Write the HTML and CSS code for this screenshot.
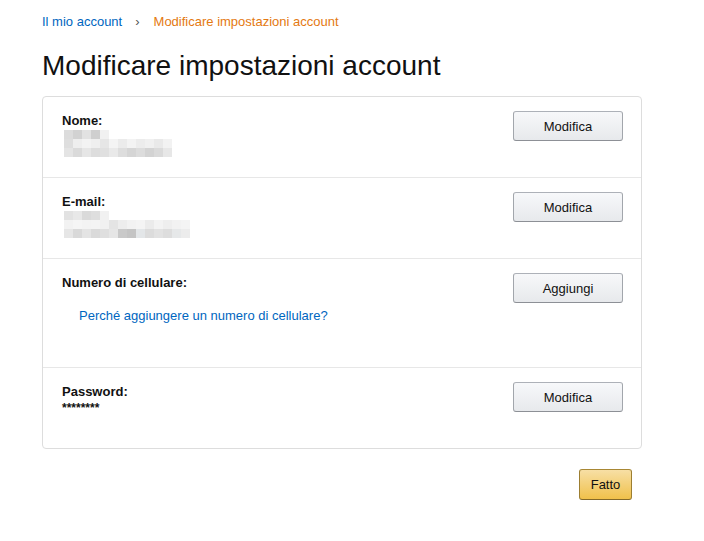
FILE: index.html
```html
<!DOCTYPE html>
<html lang="it">
<head>
<meta charset="utf-8">
<title>Modificare impostazioni account</title>
<link rel="stylesheet" href="styles.css">
</head>
<body>
<div class="page">
  <nav class="breadcrumb">
    <a class="crumb-link" href="#">Il mio account</a>
    <span class="crumb-sep">›</span>
    <span class="crumb-current">Modificare impostazioni account</span>
  </nav>
  <h1 class="title">Modificare impostazioni account</h1>
  <div class="card">
    <div class="row">
      <div class="info">
        <div class="label">Nome:</div>
        <svg class="blur" width="108" height="27" viewBox="0 0 108 27">
          <rect x="0" y="0" width="9" height="9" fill="#dcdcdc"/>
          <rect x="9" y="0" width="9" height="9" fill="#d2d2d2"/>
          <rect x="18" y="0" width="9" height="9" fill="#e2e2e2"/>
          <rect x="27" y="0" width="9" height="9" fill="#cfcfcf"/>
          <rect x="36" y="0" width="9" height="9" fill="#f1f1f1"/>
          <rect x="0" y="9" width="9" height="9" fill="#dedede"/>
          <rect x="9" y="9" width="9" height="9" fill="#eeeeee"/>
          <rect x="18" y="9" width="9" height="9" fill="#f3f3f3"/>
          <rect x="27" y="9" width="9" height="9" fill="#efefef"/>
          <rect x="36" y="9" width="9" height="9" fill="#e6e6e6"/>
          <rect x="45" y="9" width="9" height="9" fill="#f4f4f4"/>
          <rect x="54" y="9" width="9" height="9" fill="#ebebeb"/>
          <rect x="63" y="9" width="9" height="9" fill="#f3f3f3"/>
          <rect x="72" y="9" width="9" height="9" fill="#ececec"/>
          <rect x="81" y="9" width="9" height="9" fill="#f0f0f0"/>
          <rect x="90" y="9" width="9" height="9" fill="#e9e9e9"/>
          <rect x="99" y="9" width="9" height="9" fill="#f2f2f2"/>
          <rect x="0" y="18" width="9" height="9" fill="#e4e4e4"/>
          <rect x="9" y="18" width="9" height="9" fill="#dadada"/>
          <rect x="18" y="18" width="9" height="9" fill="#e6e6e6"/>
          <rect x="27" y="18" width="9" height="9" fill="#dddddd"/>
          <rect x="36" y="18" width="9" height="9" fill="#e0e0e0"/>
          <rect x="45" y="18" width="9" height="9" fill="#e9e9e9"/>
          <rect x="54" y="18" width="9" height="9" fill="#dddddd"/>
          <rect x="63" y="18" width="9" height="9" fill="#d5d5d5"/>
          <rect x="72" y="18" width="9" height="9" fill="#dcdcdc"/>
          <rect x="81" y="18" width="9" height="9" fill="#d3d3d3"/>
          <rect x="90" y="18" width="9" height="9" fill="#dadada"/>
          <rect x="99" y="18" width="9" height="9" fill="#e7e7e7"/>
        </svg>
      </div>
      <button class="btn" type="button">Modifica</button>
    </div>
    <div class="row">
      <div class="info">
        <div class="label">E-mail:</div>
        <svg class="blur" width="126" height="27" viewBox="0 0 126 27">
          <rect x="0" y="0" width="9" height="9" fill="#e2e2e2"/>
          <rect x="9" y="0" width="9" height="9" fill="#e8e8e8"/>
          <rect x="18" y="0" width="9" height="9" fill="#dadada"/>
          <rect x="27" y="0" width="9" height="9" fill="#dedede"/>
          <rect x="36" y="0" width="9" height="9" fill="#f1f1f1"/>
          <rect x="0" y="9" width="9" height="9" fill="#f2f2f2"/>
          <rect x="9" y="9" width="9" height="9" fill="#f5f5f5"/>
          <rect x="18" y="9" width="9" height="9" fill="#f3f3f3"/>
          <rect x="27" y="9" width="9" height="9" fill="#f4f4f4"/>
          <rect x="36" y="9" width="9" height="9" fill="#f1f1f1"/>
          <rect x="45" y="9" width="9" height="9" fill="#e4e4e4"/>
          <rect x="54" y="9" width="9" height="9" fill="#ededed"/>
          <rect x="63" y="9" width="9" height="9" fill="#f2f2f2"/>
          <rect x="72" y="9" width="9" height="9" fill="#f4f4f4"/>
          <rect x="81" y="9" width="9" height="9" fill="#ebebeb"/>
          <rect x="90" y="9" width="9" height="9" fill="#f3f3f3"/>
          <rect x="99" y="9" width="9" height="9" fill="#eeeeee"/>
          <rect x="108" y="9" width="9" height="9" fill="#f2f2f2"/>
          <rect x="117" y="9" width="9" height="9" fill="#f4f4f4"/>
          <rect x="0" y="18" width="9" height="9" fill="#e6e6e6"/>
          <rect x="9" y="18" width="9" height="9" fill="#d9d9d9"/>
          <rect x="18" y="18" width="9" height="9" fill="#e4e4e4"/>
          <rect x="27" y="18" width="9" height="9" fill="#dadada"/>
          <rect x="36" y="18" width="9" height="9" fill="#dfdfdf"/>
          <rect x="45" y="18" width="9" height="9" fill="#e6e6e6"/>
          <rect x="54" y="18" width="9" height="9" fill="#c9c9c9"/>
          <rect x="63" y="18" width="9" height="9" fill="#c4c4c4"/>
          <rect x="72" y="18" width="9" height="9" fill="#e3e6e8"/>
          <rect x="81" y="18" width="9" height="9" fill="#dcdcdc"/>
          <rect x="90" y="18" width="9" height="9" fill="#e2e2e2"/>
          <rect x="99" y="18" width="9" height="9" fill="#dddddd"/>
          <rect x="108" y="18" width="9" height="9" fill="#e6e8e9"/>
          <rect x="117" y="18" width="9" height="9" fill="#ececec"/>
        </svg>
      </div>
      <button class="btn" type="button">Modifica</button>
    </div>
    <div class="row row-tall">
      <div class="info">
        <div class="label">Numero di cellulare:</div>
        <a class="why-link" href="#">Perché aggiungere un numero di cellulare?</a>
      </div>
      <button class="btn" type="button">Aggiungi</button>
    </div>
    <div class="row">
      <div class="info">
        <div class="label">Password:</div>
        <div class="value">********</div>
      </div>
      <button class="btn" type="button">Modifica</button>
    </div>
  </div>
  <div class="actions">
    <button class="btn btn-primary" type="button">Fatto</button>
  </div>
</div>
</body>
</html>
```

FILE: styles.css
```css
html, body {
  margin: 0;
  padding: 0;
  background: #fff;
}
body {
  font-family: "Liberation Sans", Arial, sans-serif;
  font-size: 13px;
  line-height: 19px;
  color: #111;
}
.page {
  width: 600px;
  padding: 12px 0 0 42px;
}
.breadcrumb {
  display: flex;
  align-items: center;
  height: 19px;
}
.crumb-link {
  color: #0066c0;
  text-decoration: none;
}
.crumb-sep {
  color: #555;
  margin: 0 14px 0 13px;
}
.crumb-current {
  color: #e47911;
}
.title {
  margin: 17px 0 12px;
  font-size: 28px;
  line-height: 36px;
  font-weight: 400;
  color: #111;
}
.card {
  border: 1px solid #ddd;
  border-radius: 4px;
}
.row {
  display: flex;
  justify-content: space-between;
  align-items: flex-start;
  padding: 14px 18px 14px 19px;
  min-height: 52px;
  border-top: 1px solid #e7e7e7;
}
.row:first-child {
  border-top: none;
}
.row-tall {
  min-height: 80px;
}
.label {
  font-weight: 700;
}
.blur {
  display: block;
  margin: 0 0 0 2px;
}
.why-link {
  display: block;
  margin: 14px 0 0 17px;
  color: #0066c0;
  text-decoration: none;
}
.value {
  font-size: 12px;
  line-height: 15px;
  font-weight: 700;
}
.btn {
  width: 110px;
  height: 30px;
  padding: 0;
  font-family: "Liberation Sans", Arial, sans-serif;
  font-size: 13px;
  color: #111;
  background: linear-gradient(to bottom, #f7f8fa, #e7e9ec);
  border: 1px solid;
  border-color: #adb1b8 #a2a6ac #8d9096;
  border-radius: 3px;
  cursor: pointer;
}
.actions {
  display: flex;
  justify-content: flex-end;
  padding: 20px 10px 0 0;
}
.btn-primary {
  width: 53px;
  height: 31px;
  background: linear-gradient(to bottom, #f7dfa5, #f0c14b);
  border-color: #a88734 #9c7e31 #846a29;
}
```
